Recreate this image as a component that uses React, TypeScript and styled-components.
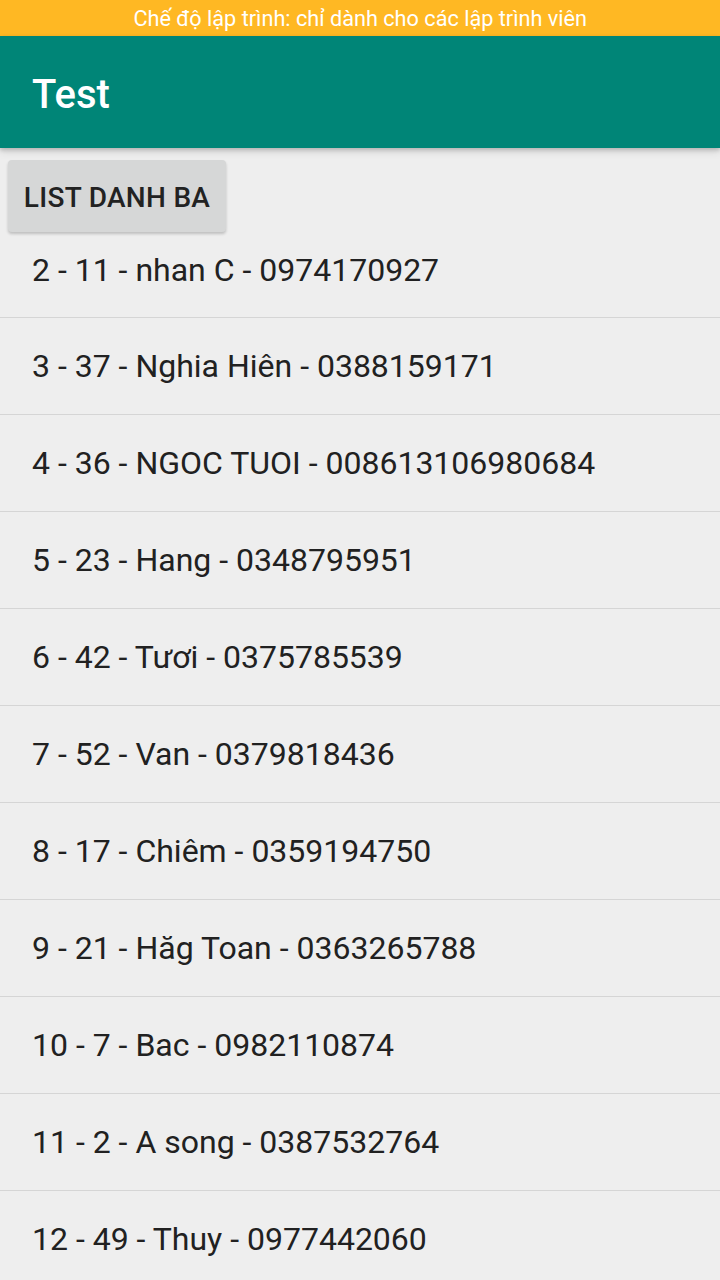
import React from "react";
import styled, { createGlobalStyle } from "styled-components";

const GlobalStyle = createGlobalStyle`
  html, body { margin: 0; padding: 0; background: #eeeeee; }
  body { font-family: Roboto, "Noto Sans", sans-serif; }
  * { box-sizing: border-box; }
`;

const Screen = styled.div`
  width: 720px;
  height: 1280px;
  overflow: hidden;
  background: #eeeeee;
  display: flex;
  flex-direction: column;
`;

const StatusBar = styled.div`
  height: 36px;
  background: #ffb823;
  display: flex;
  align-items: center;
  justify-content: center;
  flex-shrink: 0;
`;

const StatusText = styled.span`
  display: inline-block;
  color: #ffffff;
  font-size: 22px;
  line-height: 1;
  transform: scaleX(0.985);
  white-space: nowrap;
  padding-top: 1px;
`;

const AppBar = styled.header`
  height: 112px;
  background: #008577;
  display: flex;
  align-items: center;
  padding: 5px 0 0 32px;
  flex-shrink: 0;
  position: relative;
  z-index: 2;
  box-shadow: 0 2px 4px rgba(0, 0, 0, 0.18), 0 4px 8px rgba(0, 0, 0, 0.1);
`;

const Title = styled.h1`
  margin: 0;
  color: #ffffff;
  font-size: 40px;
  font-weight: 500;
  line-height: 1;
`;

const ButtonArea = styled.div`
  padding: 12px 8px 0;
  display: flex;
`;

const ActionButton = styled.button`
  width: 218px;
  height: 72px;
  border: none;
  border-radius: 4px;
  background: #d6d7d7;
  color: #222222;
  font-family: Roboto, sans-serif;
  font-size: 28px;
  font-weight: 500;
  letter-spacing: 0.3px;
  box-shadow: 0 2px 3px rgba(0, 0, 0, 0.2);
  padding: 2px 0 0;
  cursor: pointer;
`;

const List = styled.ul`
  list-style: none;
  margin: 0;
  padding: 0;
`;

const Row = styled.li<{ $first?: boolean }>`
  height: ${(p) => (p.$first ? "86px" : "97px")};
  padding: 0 0 ${(p) => (p.$first ? "10px" : "0")} 32px;
  display: flex;
  align-items: center;
  color: #212121;
  font-size: 32px;
  line-height: 1;
  border-bottom: 1px solid #d5d5d5;
  white-space: nowrap;
`;

const contacts = [
  "2 - 11 - nhan C - 0974170927",
  "3 - 37 - Nghia Hiên - 0388159171",
  "4 - 36 - NGOC TUOI - 008613106980684",
  "5 - 23 - Hang - 0348795951",
  "6 - 42 - Tươi - 0375785539",
  "7 - 52 - Van - 0379818436",
  "8 - 17 - Chiêm - 0359194750",
  "9 - 21 - Hăg Toan - 0363265788",
  "10 - 7 - Bac - 0982110874",
  "11 - 2 - A song - 0387532764",
  "12 - 49 - Thuy - 0977442060",
];

export default function App() {
  return (
    <>
      <GlobalStyle />
      <Screen>
        <StatusBar>
          <StatusText>Chế độ lập trình: chỉ dành cho các lập trình viên</StatusText>
        </StatusBar>
        <AppBar>
          <Title>Test</Title>
        </AppBar>
        <ButtonArea>
          <ActionButton>LIST DANH BA</ActionButton>
        </ButtonArea>
        <List>
          {contacts.map((c, i) => (
            <Row key={c} $first={i === 0}>
              {c}
            </Row>
          ))}
        </List>
      </Screen>
    </>
  );
}
